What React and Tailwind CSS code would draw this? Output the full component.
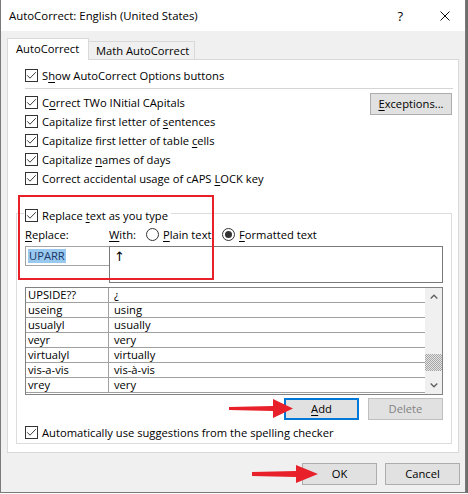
import React from "react";

const U = ({ children }) => <span className="underline underline-offset-[2px] decoration-[1px]">{children}</span>;

const Check = () => (
  <span className="w-[13px] h-[13px] border border-[#333333] bg-white flex items-center justify-center shrink-0">
    <svg width="11" height="11" viewBox="0 0 11 11">
      <path d="M1.2 5.3 L4 8.2 L9.8 2.2" stroke="#3c3c3c" strokeWidth="1" fill="none" />
    </svg>
  </span>
);

const Radio = ({ on }) => (
  <span className="w-[13px] h-[13px] rounded-full border border-[#333333] bg-white flex items-center justify-center shrink-0">
    {on && <span className="w-[7px] h-[7px] rounded-full bg-[#333333]" />}
  </span>
);

const CheckRow = ({ children }) => (
  <div className="h-[19px] flex items-center gap-[4px]">
    <Check />
    <span className="leading-[14px] whitespace-nowrap">{children}</span>
  </div>
);

const Btn = ({ children, className = "" }) => (
  <div className={"w-[75px] h-[22px] flex items-center justify-center border bg-[#e1e1e1] leading-[14px] " + className}>
    {children}
  </div>
);

const rows = [
  ["UPSIDE??", "¿"],
  ["useing", "using"],
  ["usualyl", "usually"],
  ["veyr", "very"],
  ["virtualyl", "virtually"],
  ["vis-a-vis", "vis-à-vis"],
  ["vrey", "very"],
];

export default function App() {
  return (
    <div className="w-[468px] h-[494px] bg-white relative font-['Open_Sans',sans-serif] text-[11.2px] text-black overflow-hidden">
      <div className="flex h-[493px]">
        <div className="w-[466px] h-[493px] border-x border-b border-[#7a7a7a] bg-[#f0f0f0] flex flex-col">
          {/* Title bar */}
          <div className="h-[31px] bg-white flex items-center pl-[8px] pr-[15px] shrink-0">
            <span className="flex-1 leading-[14px] pt-[1px] text-[11.4px]">AutoCorrect: English (United States)</span>
            <span className="mr-[37px] leading-[14px] text-[13px] pt-[1px]">?</span>
            <svg width="10" height="10" viewBox="0 0 10 10">
              <path d="M0.5 0.5 L9.5 9.5 M9.5 0.5 L0.5 9.5" stroke="#111" strokeWidth="1" />
            </svg>
          </div>

          {/* Tabs */}
          <div className="mt-[7px] ml-[6px] h-[21px] flex items-end shrink-0">
            <div className="w-[82px] h-[22px] -mb-[1px] relative z-10 bg-white border-t border-x border-[#d9d9d9] flex items-center pl-[8px] pb-[1px]">
              <span className="leading-[14px]">AutoCorrect</span>
            </div>
            <div className="w-[106px] h-[18px] bg-[#f0f0f0] border-t border-r border-[#d9d9d9] flex items-center pl-[7px] pt-[1px]">
              <span className="leading-[14px]">Math AutoCorrect</span>
            </div>
          </div>

          {/* Panel */}
          <div className="ml-[6px] w-[452px] h-[394px] bg-white border border-[#d9d9d9] flex flex-col shrink-0">
            <div className="mt-[6px] pl-[17px]">
              <CheckRow>S<U>h</U>ow AutoCorrect Options buttons</CheckRow>
            </div>
            <div className="mt-[3px] ml-[17px] mr-[5px] h-px bg-[#d5d5d5]" />
            <div className="mt-[4px] pl-[17px] pr-[6px] flex justify-between">
              <div className="flex flex-col">
                <CheckRow>C<U>o</U>rrect TWo INitial CApitals</CheckRow>
                <CheckRow>Capitalize first letter of <U>s</U>entences</CheckRow>
                <CheckRow>Capitalize first letter of table <U>c</U>ells</CheckRow>
                <CheckRow>Capitalize <U>n</U>ames of days</CheckRow>
                <CheckRow>Correct accidental usage of cAPS <U>L</U>OCK key</CheckRow>
              </div>
              <div className="w-[82px] h-[22px] flex items-center justify-center border border-[#adadad] bg-[#e1e1e1] leading-[14px]">
                <span><U>E</U>xceptions...</span>
              </div>
            </div>

            {/* Group box */}
            <div className="mt-[25px] ml-[8px] mr-[6px] h-[231px] border border-[#dcdcdc] flex flex-col">
              <div className="-mt-[8px] ml-[7px] w-fit bg-white pl-[1px] pr-[3px]">
                <CheckRow>Replace <U>t</U>ext as you type</CheckRow>
              </div>
              <div className="mt-[2px] ml-[8px] h-[15px] flex items-center leading-[14px]">
                <span className="w-[84px]"><U>R</U>eplace:</span>
                <span className="w-[37px]"><U>W</U>ith:</span>
                <Radio />
                <span className="ml-[4px] w-[59px]"><U>P</U>lain text</span>
                <Radio on />
                <span className="ml-[4px]"><U>F</U>ormatted text</span>
              </div>
              <div className="mt-[4px] ml-[8px] flex items-start">
                <div className="w-[84px] h-[20px] border-y border-l border-[#a3a3a3] flex items-center pl-[2px]">
                  <span className="bg-[#99c9ef] text-[#1b3768] leading-[14px] px-[1px]">UPARR</span>
                </div>
                <div className="w-[334px] h-[37px] border border-[#7a7a7a] pl-[4px] pt-[3px] leading-[14px]">
                  <span className="font-['DejaVu_Sans',sans-serif] text-[13px]">↑</span>
                </div>
              </div>

              {/* List */}
              <div className="mt-[4px] ml-[8px] w-[418px] h-[108px] border border-[#828282] flex">
                <div className="w-[399px] flex flex-col">
                  {rows.map(([a, b]) => (
                    <div key={a} className="h-[15px] flex border-b border-[#a0a0a0] leading-[14px]">
                      <div className="w-[83px] border-r border-[#a0a0a0] pl-[2px] whitespace-nowrap">{a}</div>
                      <div className="flex-1 pl-[5px] whitespace-nowrap">{b}</div>
                    </div>
                  ))}
                </div>
                <div className="w-[17px] h-[106px] bg-[#f0f0f0] flex flex-col">
                  <div className="h-[17px] flex items-center justify-center">
                    <svg width="8" height="5" viewBox="0 0 8 5">
                      <path d="M0.7 4.5 L4 1.2 L7.3 4.5" stroke="#606060" strokeWidth="1.3" fill="none" />
                    </svg>
                  </div>
                  <div className="flex-1 pt-[49px]">
                    <div className="h-[17px] bg-[repeating-conic-gradient(#a6a6a6_0%_25%,#e4e4e4_0%_50%)] bg-[length:2px_2px]" />
                  </div>
                  <div className="h-[17px] flex items-center justify-center">
                    <svg width="8" height="5" viewBox="0 0 8 5">
                      <path d="M0.7 0.5 L4 3.8 L7.3 0.5" stroke="#606060" strokeWidth="1.3" fill="none" />
                    </svg>
                  </div>
                </div>
              </div>

              {/* Add/Delete */}
              <div className="mt-[3px] mr-[8px] flex justify-end gap-[9px]">
                <Btn className="border-2 border-[#0078d7]"><span><U>A</U>dd</span></Btn>
                <Btn className="border-[#bfbfbf] bg-[#cccccc] text-[#838383]">Delete</Btn>
              </div>

              <div className="mt-[3px] ml-[8px]">
                <CheckRow>Automatically use su<U>g</U>gestions from the spelling checker</CheckRow>
              </div>
            </div>
          </div>

          {/* OK/Cancel */}
          <div className="mt-[10px] mr-[5px] flex justify-end gap-[8px] shrink-0">
            <Btn className="border-[#adadad]">OK</Btn>
            <Btn className="border-[#adadad]">Cancel</Btn>
          </div>
        </div>
        <div className="w-[2px] h-[493px] bg-[#6e6e6e]" />
      </div>

      {/* Annotations */}
      <div className="absolute left-[18px] top-[195px] w-[196px] h-[85px] border-2 border-[#e8202a]" />
      <svg className="absolute left-0 top-0" width="468" height="494" viewBox="0 0 468 494">
        <polygon points="229,407 273,406 273,399 293,408.5 273,418 273,411 229,410" fill="#e8202a" />
        <polygon points="252,472 296,471 296,465 318,474 296,483 296,477 252,476" fill="#e8202a" />
      </svg>
    </div>
  );
}
